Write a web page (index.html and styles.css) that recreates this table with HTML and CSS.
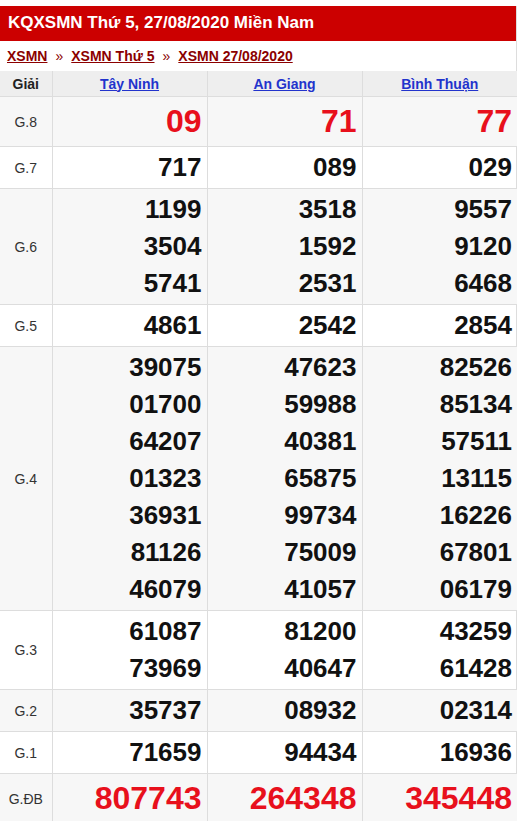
FILE: index.html
```html
<!DOCTYPE html>
<html lang="vi">
<head>
<meta charset="utf-8">
<title>KQXSMN</title>
<link rel="stylesheet" href="styles.css">
</head>
<body>
<div class="box">
  <h2 class="title">KQXSMN Thứ 5, 27/08/2020 Miền Nam</h2>
  <div class="crumbs">
    <a href="#">XSMN</a><span class="sep">»</span><a href="#">XSMN Thứ 5</a><span class="sep">»</span><a href="#">XSMN 27/08/2020</a>
  </div>
  <table class="kq">
    <colgroup><col class="c0"><col class="c1"><col class="c1"><col class="c1"></colgroup>
    <thead>
      <tr><th>Giải</th><th><a href="#">Tây Ninh</a></th><th><a href="#">An Giang</a></th><th><a href="#">Bình Thuận</a></th></tr>
    </thead>
    <tbody>
      <tr class="alt big"><td class="lb">G.8</td><td><div class="n red">09</div></td><td><div class="n red">71</div></td><td><div class="n red">77</div></td></tr>
      <tr><td class="lb">G.7</td><td><div class="n">717</div></td><td><div class="n">089</div></td><td><div class="n">029</div></td></tr>
      <tr class="alt"><td class="lb">G.6</td>
        <td><div class="n">1199</div><div class="n">3504</div><div class="n">5741</div></td>
        <td><div class="n">3518</div><div class="n">1592</div><div class="n">2531</div></td>
        <td><div class="n">9557</div><div class="n">9120</div><div class="n">6468</div></td></tr>
      <tr><td class="lb">G.5</td><td><div class="n">4861</div></td><td><div class="n">2542</div></td><td><div class="n">2854</div></td></tr>
      <tr class="alt"><td class="lb">G.4</td>
        <td><div class="n">39075</div><div class="n">01700</div><div class="n">64207</div><div class="n">01323</div><div class="n">36931</div><div class="n">81126</div><div class="n">46079</div></td>
        <td><div class="n">47623</div><div class="n">59988</div><div class="n">40381</div><div class="n">65875</div><div class="n">99734</div><div class="n">75009</div><div class="n">41057</div></td>
        <td><div class="n">82526</div><div class="n">85134</div><div class="n">57511</div><div class="n">13115</div><div class="n">16226</div><div class="n">67801</div><div class="n">06179</div></td></tr>
      <tr><td class="lb">G.3</td>
        <td><div class="n">61087</div><div class="n">73969</div></td>
        <td><div class="n">81200</div><div class="n">40647</div></td>
        <td><div class="n">43259</div><div class="n">61428</div></td></tr>
      <tr class="alt"><td class="lb">G.2</td><td><div class="n">35737</div></td><td><div class="n">08932</div></td><td><div class="n">02314</div></td></tr>
      <tr><td class="lb">G.1</td><td><div class="n">71659</div></td><td><div class="n">94434</div></td><td><div class="n">16936</div></td></tr>
      <tr class="alt big"><td class="lb">G.ĐB</td><td><div class="n red">807743</div></td><td><div class="n red">264348</div></td><td><div class="n red">345448</div></td></tr>
    </tbody>
  </table>
</div>
</body>
</html>
```
FILE: styles.css
```css
html, body {
  margin: 0;
  padding: 0;
  background: #fff;
}
body {
  font-family: "Liberation Sans", Arial, sans-serif;
  color: #222;
}
.box {
  width: 516px;
  margin-top: 6px;
  border-right: 1px solid #ddd;
}
.title {
  margin: 0;
  height: 35px;
  line-height: 34px;
  background: #cc0000;
  color: #fff;
  font-size: 17px;
  font-weight: bold;
  padding-left: 8px;
}
.crumbs {
  height: 30px;
  line-height: 30px;
  padding-left: 7px;
  font-size: 14px;
  font-weight: bold;
}
.crumbs a {
  color: #8b0000;
  text-decoration: underline;
}
.crumbs .sep {
  color: #8b0000;
  font-weight: normal;
  margin: 0 8px;
}
.kq {
  width: 516px;
  border-collapse: collapse;
  table-layout: fixed;
}
.kq .c0 { width: 52px; }
.kq .c1 { width: 155px; }
.kq th {
  background: #eee;
  font-size: 14px;
  font-weight: bold;
  height: 21px;
  padding: 2px 5px;
  border: 1px solid #ddd;
  border-top: none;
  text-align: center;
  color: #222;
}
.kq th a {
  color: #2233cc;
  text-decoration: underline;
}
.kq td {
  border: 1px solid #ddd;
  padding: 2px 5px;
  text-align: right;
  vertical-align: middle;
}
.kq tr > :first-child { border-left: none; }
.kq tr > :last-child { border-right: none; }
.kq td.lb {
  text-align: center;
  font-size: 14px;
  color: #333;
  padding: 0;
}
.kq tr.alt td { background: #f7f7f7; }
.n {
  font-size: 26px;
  font-weight: bold;
  line-height: 37px;
  color: #111;
}
.big .n {
  font-size: 32px;
  line-height: 45px;
}
.n.red { color: #e8101c; }
```
